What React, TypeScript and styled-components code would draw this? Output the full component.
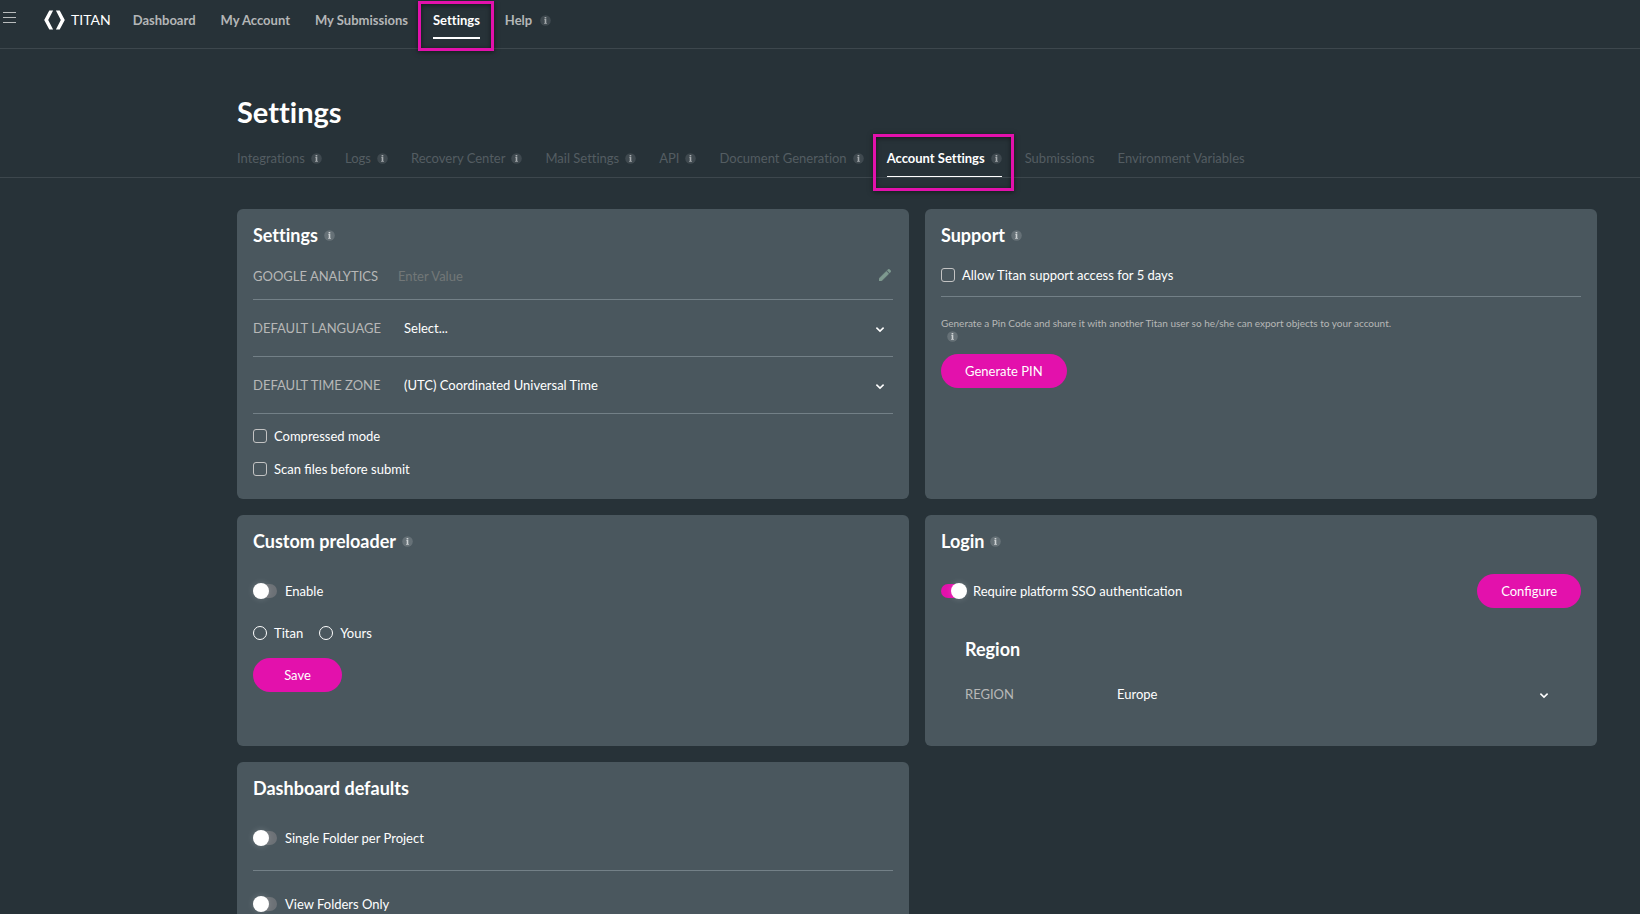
import React, { useState } from "react";
import styled, { createGlobalStyle, css } from "styled-components";

const color = {
  page: "#273238",
  card: "#4a575e",
  accent: "#e311ac",
  line: "#738087",
  rule: "#3d474d",
  nav: "#b4b6b7",
  muted: "#b7b7b7",
  faint: "#545d62",
  white: "#ffffff",
};

const GlobalStyle = createGlobalStyle`
  *, *::before, *::after { box-sizing: border-box; }
  body {
    margin: 0;
    background: ${color.page};
    color: ${color.white};
    font-family: Lato, "Liberation Sans", sans-serif;
    font-size: 14px;
    line-height: 20px;
  }
  h1, h2, h3, p, ul, fieldset { margin: 0; padding: 0; border: 0; }
  h1, h2, h3, nav { font-variant-ligatures: none; }
  button, input, select { font: inherit; color: inherit; margin: 0; }
`;

const Page = styled.div`
  height: 100vh;
  overflow: hidden;
`;

const TopBar = styled.header`
  display: flex;
  align-items: center;
  height: 49px;
  padding: 0 3px 8px;
  border-bottom: 1px solid ${color.rule};
`;

const MenuButton = styled.button`
  display: flex;
  width: 13px;
  height: 32px;
  padding: 0 0 6px;
  align-items: center;
  border: 0;
  background: none;
`;

const Brand = styled.a`
  display: flex;
  align-items: center;
  gap: 6px;
  margin: 0 22px 0 28px;
  color: ${color.white};
  font-size: 14px;
  text-decoration: none;
`;

const Nav = styled.nav`
  display: flex;
  gap: 25px;
`;

const highlight = css`
  &::after {
    content: "";
    position: absolute;
    border: 3px solid ${color.accent};
    box-shadow: 0 1px 5px rgba(0, 0, 0, 0.5), inset 0 1px 5px rgba(0, 0, 0, 0.5);
    pointer-events: none;
  }
`;

const NavLink = styled.a<{ $active?: boolean }>`
  position: relative;
  display: flex;
  align-items: center;
  gap: 8px;
  font-size: 13px;
  font-weight: 700;
  text-decoration: none;
  color: ${(p) => (p.$active ? color.white : color.nav)};
  ${(p) =>
    p.$active &&
    css`
      &::before {
        content: "";
        position: absolute;
        left: 0;
        right: 0;
        bottom: -9px;
        height: 2px;
        background: ${color.white};
      }
      ${highlight}
      &::after {
        inset: -9px -14px -21px -15px;
      }
    `}
`;

const PageHead = styled.div`
  padding: 47px 43px 0 237px;
  border-bottom: 1px solid ${color.rule};
`;

const PageTitle = styled.h1`
  font-size: 29px;
  line-height: 32px;
`;

const Tabs = styled.nav`
  display: flex;
  gap: 23px;
  margin-top: 20px;
`;

const Tab = styled.a<{ $active?: boolean }>`
  position: relative;
  display: flex;
  align-items: center;
  gap: 6px;
  height: 29px;
  padding-bottom: 9px;
  font-size: 13px;
  white-space: nowrap;
  text-decoration: none;
  color: ${(p) => (p.$active ? color.white : color.faint)};
  font-weight: ${(p) => (p.$active ? 700 : 400)};
  ${(p) =>
    p.$active &&
    css`
      border-bottom: 1px solid ${color.white};
      padding-bottom: 8px;
      ${highlight}
      &::after {
        inset: -14px -12px -15px -14px;
      }
    `}
`;

const Grid = styled.main`
  display: grid;
  grid-template-columns: 1fr 1fr;
  gap: 16px;
  padding: 31px 43px 16px 237px;
`;

const Card = styled.section`
  min-height: 231px;
  padding: 16px 16px 14px;
  border-radius: 6px;
  background: ${color.card};
`;

const CardTitle = styled.h2`
  display: flex;
  align-items: center;
  gap: 6px;
  font-size: 18px;
  line-height: 20px;
`;

const Fields = styled.div`
  margin-top: 8px;
`;

const Field = styled.div<{ $compact?: boolean }>`
  display: flex;
  align-items: center;
  height: ${(p) => (p.$compact ? 47 : 57)}px;
  border-bottom: 1px solid ${color.line};
`;

const FieldLabel = styled.label<{ $width: number }>`
  flex: none;
  width: ${(p) => p.$width}px;
  color: ${color.muted};
  font-size: 13px;
`;

const TextInput = styled.input`
  flex: 1;
  min-width: 0;
  padding: 0;
  border: 0;
  outline: 0;
  background: none;
  font-size: 13px;
  &::placeholder {
    color: #727778;
    opacity: 1;
  }
`;

const IconButton = styled.button`
  display: flex;
  padding: 0 2px 2px;
  border: 0;
  background: none;
`;

const SelectBox = styled.div`
  position: relative;
  flex: 1;
  display: flex;
  align-items: center;
  svg {
    position: absolute;
    right: 8px;
    bottom: 11px;
    pointer-events: none;
  }
`;

const Select = styled.select`
  width: 100%;
  height: 32px;
  padding: 0 24px 0 6px;
  appearance: none;
  border: 0;
  background: none;
  font-size: 13px;
`;

const CheckList = styled.div`
  margin-top: 5px;
`;

const CheckRow = styled.label`
  display: flex;
  align-items: center;
  gap: 7px;
  height: 33px;
  font-size: 13px;
`;

const CheckBox = styled.input`
  width: 14px;
  height: 14px;
  appearance: none;
  border: 1px solid #c3c3c3;
  border-radius: 3px;
`;

const RadioGroup = styled.fieldset`
  display: flex;
  gap: 16px;
  margin-top: 9px;
`;

const RadioRow = styled(CheckRow)`
  height: 32px;
`;

const Radio = styled.input`
  width: 14px;
  height: 14px;
  appearance: none;
  border: 1px solid ${color.white};
  border-radius: 50%;
`;

const SupportAccess = styled.div`
  margin-top: 13px;
  padding-bottom: 5px;
  border-bottom: 1px solid ${color.line};
`;

const Hint = styled.p`
  margin-top: 20px;
  color: ${color.muted};
  font-size: 10px;
  line-height: 13px;
`;

const HintIcon = styled.div`
  display: flex;
  padding: 1px 6px;
`;

const Pill = styled.button`
  height: 34px;
  min-width: 89px;
  padding: 0 24px;
  border: 0;
  border-radius: 17px;
  background: ${color.accent};
  color: ${color.white};
  font-size: 13px;
`;

const PinButton = styled(Pill)`
  margin-top: 11px;
`;

const SaveButton = styled(Pill)`
  margin-top: 9px;
`;

const SwitchLine = styled.div<{ $divided?: boolean }>`
  display: flex;
  align-items: center;
  justify-content: space-between;
  height: 34px;
  ${(p) =>
    p.$divided &&
    css`
      height: 66px;
      padding-top: 1px;
      border-bottom: 1px solid ${color.line};
    `}
`;

const SwitchStack = styled.div<{ $top: number }>`
  margin-top: ${(p) => p.$top}px;
`;

const SwitchLabel = styled.label`
  display: flex;
  align-items: center;
  gap: 8px;
  font-size: 13px;
`;

const Switch = styled.input`
  position: relative;
  width: 24px;
  height: 14px;
  appearance: none;
  border-radius: 7px;
  background: #6c7176;
  &::before {
    content: "";
    position: absolute;
    top: -1px;
    left: 0;
    width: 16px;
    height: 16px;
    border-radius: 50%;
    background: ${color.white};
    box-shadow: 0 0 6px rgba(255, 255, 255, 0.2);
  }
  &:checked {
    background: ${color.accent};
  }
  &:checked::before {
    left: 10px;
  }
`;

const Region = styled.div`
  padding: 0 24px;
  margin-top: 31px;
`;

const RegionTitle = styled.h3`
  font-size: 18px;
  line-height: 20px;
`;

const RegionField = styled.div`
  display: flex;
  align-items: center;
  margin-top: 19px;
`;

const InfoSvg = styled.svg`
  flex: none;
  display: block;
`;

function Info({ onCard = false }: { onCard?: boolean }) {
  return (
    <InfoSvg width="11" height="11" viewBox="0 0 11 11" aria-hidden="true">
      <circle cx="5.5" cy="5.5" r="5.3" fill={onCard ? "#667177" : "#3f494f"} />
      <path
        d="M4.6 2h1.7v1.4H4.6zM4.3 4h2v3.9h.6v.8H4.1v-.8h.6V4.7h-.4z"
        fill={onCard ? "#ced2d4" : "#a6abae"}
      />
    </InfoSvg>
  );
}

function Chevron() {
  return (
    <svg width="10" height="7" viewBox="0 0 10 7" aria-hidden="true">
      <path d="M1.4 1.6 5 5.1l3.6-3.5" fill="none" stroke="#fff" strokeWidth="1.5" />
    </svg>
  );
}

function Pencil() {
  return (
    <svg width="12" height="12" viewBox="3 3 18 18" aria-hidden="true">
      <path
        d="M3 17.25V21h3.75L17.81 9.94l-3.75-3.75L3 17.25zM20.71 7.04a1 1 0 0 0 0-1.41l-2.34-2.34a1 1 0 0 0-1.41 0l-1.83 1.83 3.75 3.75 1.83-1.83z"
        fill="#7e998f"
        stroke="#7e998f"
        strokeWidth="0.6"
      />
    </svg>
  );
}

function Logo() {
  return (
    <svg width="21" height="20" viewBox="0 0 21 20" aria-hidden="true">
      <path d="M5.3.5h3.8L4.2 10l4.9 9.5H5.3L.2 10z" fill="#fff" />
      <path d="M11.9.5h3.8l5.1 9.5-5.1 9.5h-3.8l4.9-9.5z" fill="#fff" />
    </svg>
  );
}

function MenuIcon() {
  return (
    <svg width="13" height="11" viewBox="0 0 13 11" aria-hidden="true">
      <path d="M0 0h13v1H0zM0 5h13v1H0zM0 10h13v1H0z" fill="#b9bcbd" />
    </svg>
  );
}

const navItems = [
  { label: "Dashboard" },
  { label: "My Account" },
  { label: "My Submissions" },
  { label: "Settings", active: true },
  { label: "Help", info: true },
];

const tabs = [
  { label: "Integrations", info: true },
  { label: "Logs", info: true },
  { label: "Recovery Center", info: true },
  { label: "Mail Settings", info: true },
  { label: "API", info: true },
  { label: "Document Generation", info: true },
  { label: "Account Settings", info: true, active: true },
  { label: "Submissions" },
  { label: "Environment Variables" },
];

function Toggle({ label, initial = false }: { label: string; initial?: boolean }) {
  const [on, setOn] = useState(initial);
  return (
    <SwitchLabel>
      <Switch type="checkbox" role="switch" checked={on} onChange={() => setOn(!on)} />
      {label}
    </SwitchLabel>
  );
}

function Check({ label }: { label: string }) {
  return (
    <CheckRow>
      <CheckBox type="checkbox" />
      {label}
    </CheckRow>
  );
}

export default function App() {
  return (
    <Page>
      <GlobalStyle />
      <TopBar>
        <MenuButton type="button" aria-label="Menu">
          <MenuIcon />
        </MenuButton>
        <Brand href="#">
          <Logo />
          TITAN
        </Brand>
        <Nav>
          {navItems.map((n) => (
            <NavLink key={n.label} href="#" $active={n.active}>
              {n.label}
              {n.info && <Info />}
            </NavLink>
          ))}
        </Nav>
      </TopBar>
      <PageHead>
        <PageTitle>Settings</PageTitle>
        <Tabs>
          {tabs.map((t) => (
            <Tab key={t.label} href="#" $active={t.active}>
              {t.label}
              {t.info && <Info />}
            </Tab>
          ))}
        </Tabs>
      </PageHead>
      <Grid>
        <Card>
          <CardTitle>
            Settings <Info onCard />
          </CardTitle>
          <Fields>
            <Field $compact>
              <FieldLabel $width={145} htmlFor="ga">
                GOOGLE ANALYTICS
              </FieldLabel>
              <TextInput id="ga" placeholder="Enter Value" />
              <IconButton type="button" aria-label="Edit">
                <Pencil />
              </IconButton>
            </Field>
            <Field>
              <FieldLabel $width={145} htmlFor="lang">
                DEFAULT LANGUAGE
              </FieldLabel>
              <SelectBox>
                <Select id="lang">
                  <option>Select...</option>
                </Select>
                <Chevron />
              </SelectBox>
            </Field>
            <Field>
              <FieldLabel $width={145} htmlFor="zone">
                DEFAULT TIME ZONE
              </FieldLabel>
              <SelectBox>
                <Select id="zone">
                  <option>(UTC) Coordinated Universal Time</option>
                </Select>
                <Chevron />
              </SelectBox>
            </Field>
          </Fields>
          <CheckList>
            <Check label="Compressed mode" />
            <Check label="Scan files before submit" />
          </CheckList>
        </Card>

        <Card>
          <CardTitle>
            Support <Info onCard />
          </CardTitle>
          <SupportAccess>
            <Check label="Allow Titan support access for 5 days" />
          </SupportAccess>
          <Hint>
            Generate a Pin Code and share it with another Titan user so he/she can export objects to
            your account.
          </Hint>
          <HintIcon>
            <Info onCard />
          </HintIcon>
          <PinButton type="button">Generate PIN</PinButton>
        </Card>

        <Card>
          <CardTitle>
            Custom preloader <Info onCard />
          </CardTitle>
          <SwitchStack $top={23}>
            <SwitchLine>
              <Toggle label="Enable" />
            </SwitchLine>
          </SwitchStack>
          <RadioGroup aria-label="Preloader">
            <RadioRow>
              <Radio type="radio" name="preloader" />
              Titan
            </RadioRow>
            <RadioRow>
              <Radio type="radio" name="preloader" />
              Yours
            </RadioRow>
          </RadioGroup>
          <SaveButton type="button">Save</SaveButton>
        </Card>

        <Card>
          <CardTitle>
            Login <Info onCard />
          </CardTitle>
          <SwitchStack $top={23}>
            <SwitchLine>
              <Toggle label="Require platform SSO authentication" initial />
              <Pill type="button">Configure</Pill>
            </SwitchLine>
          </SwitchStack>
          <Region>
            <RegionTitle>Region</RegionTitle>
            <RegionField>
              <FieldLabel $width={146} htmlFor="region">
                REGION
              </FieldLabel>
              <SelectBox>
                <Select id="region">
                  <option>Europe</option>
                </Select>
                <Chevron />
              </SelectBox>
            </RegionField>
          </Region>
        </Card>

        <Card>
          <CardTitle>Dashboard defaults</CardTitle>
          <SwitchStack $top={7}>
            <SwitchLine $divided>
              <Toggle label="Single Folder per Project" />
            </SwitchLine>
            <SwitchLine $divided>
              <Toggle label="View Folders Only" />
            </SwitchLine>
          </SwitchStack>
        </Card>
      </Grid>
    </Page>
  );
}
